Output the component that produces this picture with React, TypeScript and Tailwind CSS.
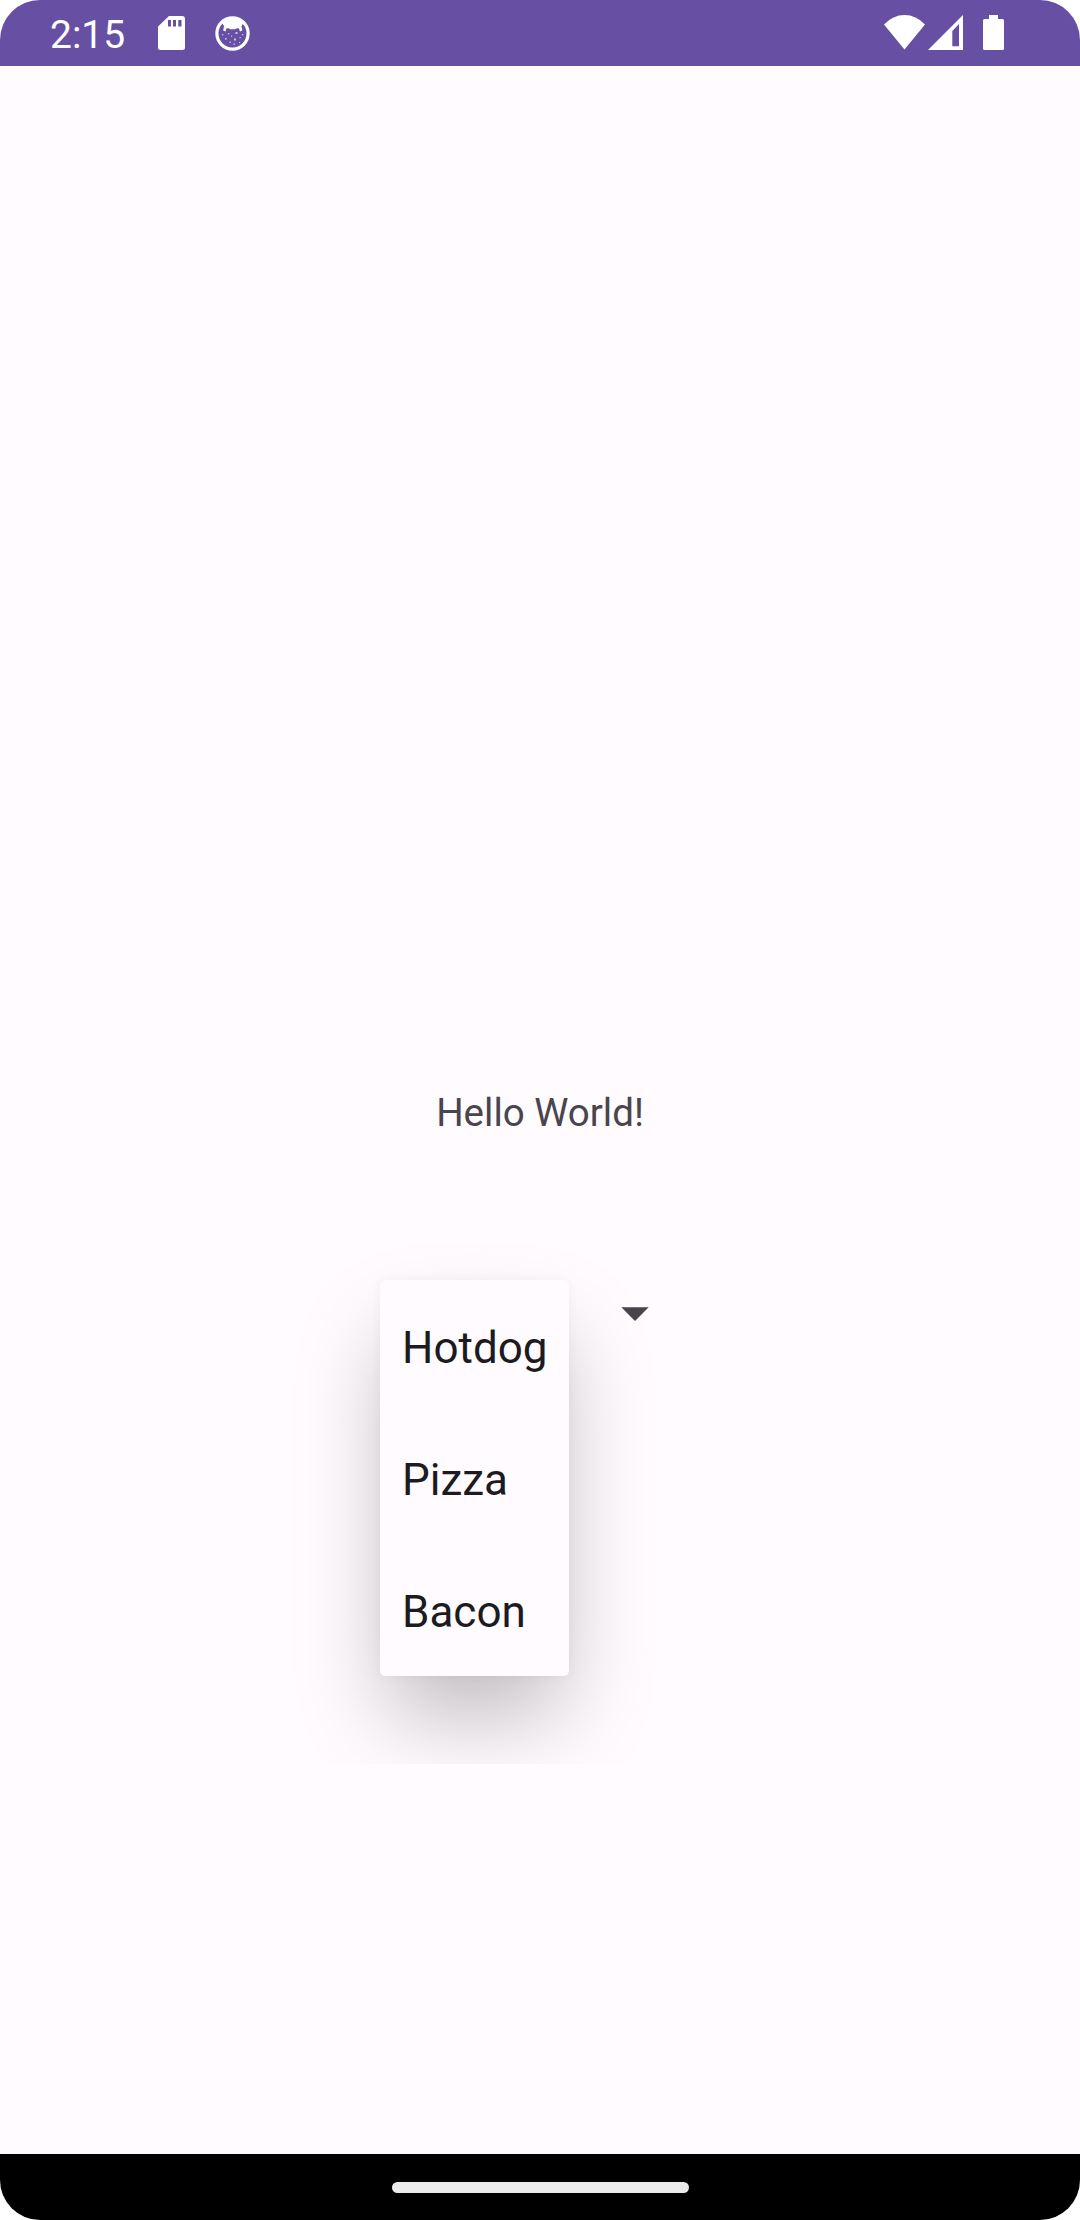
const OPTIONS = ['Hotdog', 'Pizza', 'Bacon'];

const SdCardIcon = () => (
  <svg width="27" height="34" viewBox="0 0 27 34" className="ml-[34px]">
    <path
      fill="#fff"
      fillRule="evenodd"
      d="M11 0H24Q27 0 27 3V31.500Q27 34 24.500 34H2.500Q0 34 0 31.500V10.500ZM10 4V10.500H13V4ZM15 4V10.500H18V4ZM20.300 4V10.500H23.500V4Z"
    />
  </svg>
);

const DebugIcon = () => (
  <svg width="37" height="36" viewBox="0 0 37 36" className="ml-[29px]">
    <circle cx="18.500" cy="17.500" r="15.600" fill="none" stroke="#fff" strokeWidth="3.200" />
    <path
      fill="#fff"
      d="M8 7Q12 1.500 18.500 1.500T29.500 7L27.500 10 28.300 14.500 26 15.500 24.800 12.300Q22.500 11.800 21.200 13.300H16.200Q15 11.800 12.600 12.300L11.400 15.500 9.200 14.500 10 10Z"
    />
    <g fill="#fff" opacity="0.65">
      <rect x="8" y="18" width="1.300" height="1.300" />
      <rect x="14" y="17" width="1.300" height="1.300" />
      <rect x="21.500" y="16" width="2" height="2" />
      <rect x="28" y="18" width="1.300" height="1.300" />
      <rect x="17" y="19.500" width="1.200" height="1.200" />
      <rect x="11" y="22" width="1.600" height="1.600" />
      <rect x="20" y="22.500" width="2" height="2" />
      <rect x="25.500" y="21" width="1.200" height="1.200" />
      <rect x="15.500" y="25.500" width="1.400" height="1.400" />
      <rect x="25" y="26" width="1.200" height="1.200" />
      <rect x="19.500" y="27.500" width="1.400" height="1.400" />
    </g>
  </svg>
);

const WifiIcon = () => (
  <svg width="41" height="35" viewBox="0 0 41 35">
    <path fill="#fff" d="M0 9.500Q9 0 20.500 0T41 9.500L20.500 34.500Z" />
  </svg>
);

const SignalIcon = () => (
  <svg width="35" height="35" viewBox="0 0 35 35" className="ml-[3px]">
    <path fill="#fff" fillRule="evenodd" d="M0 35L35 0V35ZM24.300 16V31.300H31V9Z" />
  </svg>
);

const BatteryIcon = () => (
  <svg width="21" height="35" viewBox="0 0 21 35" className="ml-5">
    <path
      fill="#fff"
      d="M6 0H15V4H19.500Q21 4 21 5.500V33.500Q21 35 19.500 35H1.500Q0 35 0 33.500V5.500Q0 4 1.500 4H6Z"
    />
  </svg>
);

const StatusBar = () => (
  <header className="flex h-[66px] items-start justify-between bg-[#6750a4] pr-[76px] pl-[50px]">
    <div className="flex pt-4">
      <span className="h-9 w-[74px] text-[39px] leading-[38px] text-white">2:15</span>
      <SdCardIcon />
      <DebugIcon />
    </div>
    <div className="flex pt-[15px]">
      <WifiIcon />
      <SignalIcon />
      <BatteryIcon />
    </div>
  </header>
);

// The popup window keeps an 88px margin around the menu and clips its shadow there.
const DropdownMenu = () => (
  <div className="absolute top-[-88px] left-[-88px] overflow-hidden p-[88px]">
    <ul className="w-[189px] rounded-[5.5px] bg-[#fffbfe] shadow-[0_48px_92px_-9px_rgba(0,0,0,0.26),0_0_12px_rgba(0,0,0,0.04)]">
      {OPTIONS.map((option) => (
        <li
          key={option}
          className="flex h-[132px] items-center pt-[3px] pl-[22px] text-[44px] leading-[52px] text-[#1c1b1f]"
        >
          {option}
        </li>
      ))}
    </ul>
  </div>
);

const Spinner = () => (
  <div className="relative mt-[141px] ml-[380px] flex h-[66px] w-[320px] justify-end pt-[27px] pr-[51px]">
    <svg width="28" height="14" viewBox="0 0 28 14">
      <path fill="#49454f" d="M0.300 0.300H27.700L14 14Z" />
    </svg>
    <DropdownMenu />
  </div>
);

export default function App() {
  return (
    <div className="h-[2220px] w-[1080px] bg-white font-['Roboto',sans-serif]">
      <div className="flex h-full flex-col overflow-hidden rounded-[40px] bg-[#fffbfe]">
        <StatusBar />
        <main className="flex-1 pt-[1021px]">
          <p className="h-[52px] text-center text-[38.5px] leading-[52px] text-[#49454f]">Hello World!</p>
          <Spinner />
        </main>
        <nav className="flex h-[66px] justify-center bg-black pt-[27.5px]">
          <div className="h-[11px] w-[297px] rounded-full bg-[#ebebeb]" />
        </nav>
      </div>
    </div>
  );
}
